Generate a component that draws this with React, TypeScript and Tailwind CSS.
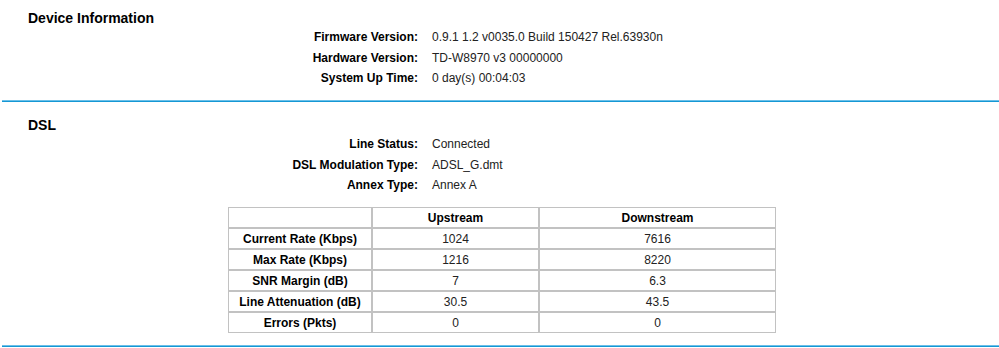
import React from "react";

const font = { fontFamily: '"Liberation Sans", Arial, sans-serif' };

function InfoRow({ label, value }: { label: string; value: string }) {
  return (
    <div className="flex h-[20.5px] items-center text-[12px]">
      <div className="w-[418px] shrink-0 text-right font-bold text-black">{label}</div>
      <div className="pl-[14px] text-[#222]">{value}</div>
    </div>
  );
}

const rows = [
  ["Current Rate (Kbps)", "1024", "7616"],
  ["Max Rate (Kbps)", "1216", "8220"],
  ["SNR Margin (dB)", "7", "6.3"],
  ["Line Attenuation (dB)", "30.5", "43.5"],
  ["Errors (Pkts)", "0", "0"],
];

function Rule() {
  return <div className="ml-[2px] h-[2px] border-t border-[#6cc0e8] bg-[#1597d4]" />;
}

export default function App() {
  return (
    <div className="w-[999px] h-[348px] bg-white overflow-hidden" style={font}>
      <div className="pt-[9px] pb-[11.5px]">
        <div className="pl-[28px] h-[18px] leading-[18px] text-[14px] font-bold text-black">Device Information</div>
        <InfoRow label="Firmware Version:" value="0.9.1 1.2 v0035.0 Build 150427 Rel.63930n" />
        <InfoRow label="Hardware Version:" value="TD-W8970 v3 00000000" />
        <InfoRow label="System Up Time:" value="0 day(s) 00:04:03" />
      </div>
      <Rule />
      <div className="pt-[14px] pb-[12px]">
        <div className="pl-[28px] h-[18px] leading-[18px] text-[14px] font-bold text-black">DSL</div>
        <InfoRow label="Line Status:" value="Connected" />
        <InfoRow label="DSL Modulation Type:" value="ADSL_G.dmt" />
        <InfoRow label="Annex Type:" value="Annex A" />
        <div className="pl-[228px] mt-[11.5px] flex">
          <table className="w-[548px] border-separate border-spacing-0 text-[12px] text-center">
            <colgroup>
              <col className="w-[144px]" />
              <col className="w-[167px]" />
              <col className="w-[237px]" />
            </colgroup>
            <thead>
              <tr className="h-[21px]">
                <th className="border border-[#c2c2c2] p-0"></th>
                <th className="border border-[#c2c2c2] p-0 font-bold text-black">Upstream</th>
                <th className="border border-[#c2c2c2] p-0 font-bold text-black">Downstream</th>
              </tr>
            </thead>
            <tbody>
              {rows.map((r) => (
                <tr key={r[0]} className="h-[21px]">
                  <td className="border border-[#c2c2c2] p-0 font-bold text-black">{r[0]}</td>
                  <td className="border border-[#c2c2c2] p-0 text-[#222]">{r[1]}</td>
                  <td className="border border-[#c2c2c2] p-0 text-[#222]">{r[2]}</td>
                </tr>
              ))}
            </tbody>
          </table>
        </div>
      </div>
      <Rule />
    </div>
  );
}
